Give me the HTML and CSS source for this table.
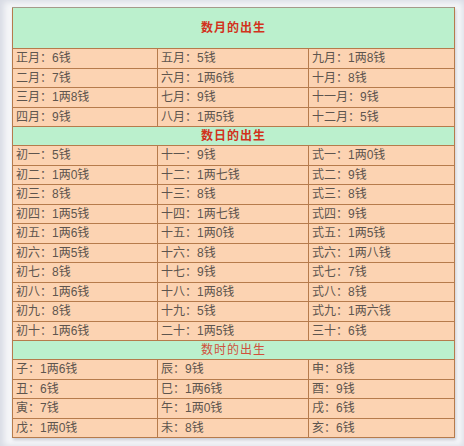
FILE: index.html
```html
<!DOCTYPE html>
<html>
<head>
<meta charset="utf-8">
<link rel="stylesheet" href="styles.css">
</head>
<body>
<div class="frame">
<table class="tbl">
<colgroup><col class="c1"><col class="c2"><col class="c3"></colgroup>
<tr class="head big"><th colspan="3">数月的出生</th></tr>
<tr><td>正月：6钱</td><td>五月：5钱</td><td>九月：1两8钱</td></tr>
<tr><td>二月：7钱</td><td>六月：1两6钱</td><td>十月：8钱</td></tr>
<tr><td>三月：1两8钱</td><td>七月：9钱</td><td>十一月：9钱</td></tr>
<tr><td>四月：9钱</td><td>八月：1两5钱</td><td>十二月：5钱</td></tr>
<tr class="head"><th colspan="3">数日的出生</th></tr>
<tr><td>初一：5钱</td><td>十一：9钱</td><td>式一：1两0钱</td></tr>
<tr><td>初二：1两0钱</td><td>十二：1两七钱</td><td>式二：9钱</td></tr>
<tr><td>初三：8钱</td><td>十三：8钱</td><td>式三：8钱</td></tr>
<tr><td>初四：1两5钱</td><td>十四：1两七钱</td><td>式四：9钱</td></tr>
<tr><td>初五：1两6钱</td><td>十五：1两0钱</td><td>式五：1两5钱</td></tr>
<tr><td>初六：1两5钱</td><td>十六：8钱</td><td>式六：1两八钱</td></tr>
<tr><td>初七：8钱</td><td>十七：9钱</td><td>式七：7钱</td></tr>
<tr><td>初八：1两6钱</td><td>十八：1两8钱</td><td>式八：8钱</td></tr>
<tr><td>初九：8钱</td><td>十九：5钱</td><td>式九：1两六钱</td></tr>
<tr><td>初十：1两6钱</td><td>二十：1两5钱</td><td>三十：6钱</td></tr>
<tr class="head light"><th colspan="3">数时的出生</th></tr>
<tr><td>子：1两6钱</td><td>辰：9钱</td><td>申：8钱</td></tr>
<tr><td>丑：6钱</td><td>巳：1两6钱</td><td>酉：9钱</td></tr>
<tr><td>寅：7钱</td><td>午：1两0钱</td><td>戌：6钱</td></tr>
<tr><td>戊：1两0钱</td><td>未：8钱</td><td>亥：6钱</td></tr>
</table>
</div>
</body>
</html>
```
FILE: styles.css
```css
html, body {
  margin: 0;
  padding: 0;
  background: #ffffff;
}
body {
  width: 464px;
  height: 446px;
  overflow: hidden;
}
.frame {
  padding: 7px 10px 9px 12px;
  background: #f6f7f9;
  box-shadow: inset 6px 4px 6px -2px #d8dbe4, inset -4px -3px 5px -2px #dfe1e8;
  height: 446px;
  box-sizing: border-box;
}
.tbl {
  border-collapse: collapse;
  width: 442px;
  table-layout: fixed;
  font-family: "Liberation Sans", "Noto Sans CJK SC", sans-serif;
  font-size: 12px;
  color: #5e554e;
  background: #fcd3b2;
  box-shadow: 1px 2px 3px rgba(120, 120, 140, 0.35);
}
.c1 { width: 145px; }
.c2 { width: 151px; }
.c3 { width: 146px; }
.tbl td, .tbl th {
  border: 1px solid #b67b4c;
  padding: 0 0 0 3px;
  height: 18.5px;
  line-height: 18px;
  text-align: left;
  white-space: nowrap;
}
.tbl tr.head th {
  background: #bbf0cd;
  color: #d2321c;
  font-weight: bold;
  text-align: center;
  padding: 0;
  height: 18px;
  letter-spacing: 1px;
}
.tbl tr.head.big th {
  height: 40px;
  border-top-color: #a59a8a;
}
.tbl tr.head.light th {
  font-weight: normal;
  color: #d0503c;
  height: 18px;
}
```
